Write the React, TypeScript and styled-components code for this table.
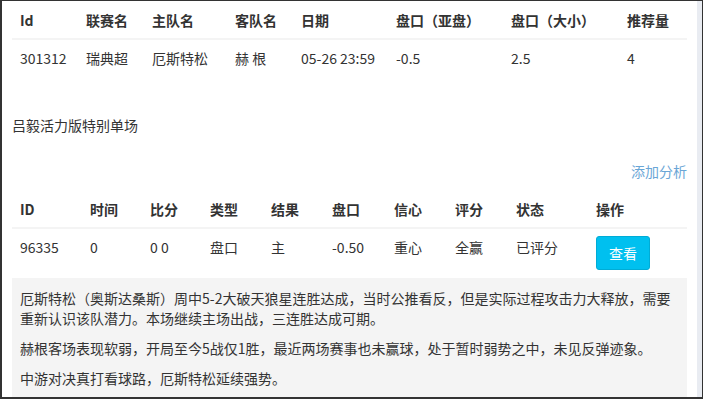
import styled, { createGlobalStyle } from "styled-components";

const GlobalStyle = createGlobalStyle`
  html, body {
    margin: 0;
    padding: 0;
    background: #fff;
  }
  * {
    box-sizing: border-box;
  }
`;

const Frame = styled.div`
  display: flex;
  width: 703px;
  height: 399px;
  border-style: solid;
  border-color: #333;
  border-width: 1px 1px 2px 2px;
  overflow: hidden;
  font-family: "Noto Sans CJK SC", "Noto Sans", sans-serif;
  font-size: 14px;
  line-height: 20px;
  color: #333;
`;

const Content = styled.div`
  flex: 1;
  padding: 1px 8px 0 10px;
  overflow: hidden;
`;

const ScrollTrack = styled.div`
  width: 5px;
  background: #e9ecf2;
`;

const Table = styled.table`
  width: 675px;
  border-collapse: collapse;
  table-layout: fixed;

  th {
    font-weight: 700;
    text-align: left;
    padding: 8px;
    border-bottom: 2px solid #f4f4f4;
    white-space: nowrap;
  }

  td {
    text-align: left;
    vertical-align: top;
    padding: 8px;
    white-space: nowrap;
  }
`;

const Title = styled.p`
  margin: 39px 0 0;
`;

const Toolbar = styled.div`
  display: flex;
  justify-content: flex-end;
  width: 675px;
  margin-top: 26px;
  margin-bottom: 10px;
`;

const AddLink = styled.a`
  color: #6aa6d6;
  text-decoration: none;
  cursor: pointer;
`;

const ViewButton = styled.button`
  font-family: inherit;
  font-size: 14px;
  line-height: 20px;
  color: #fff;
  background: #00c0ef;
  border: 1px solid #00acd6;
  border-radius: 3px;
  padding: 6px 12px;
  margin-top: -1px;
  cursor: pointer;
`;

const Analysis = styled.div`
  width: 675px;
  background: #f4f4f4;
  padding: 10px 8px 20px;

  p {
    margin: 0 0 10px;
  }
`;

const matchCols = [66, 66, 83, 66, 95, 115, 116, 68];
const tipCols = [70, 60, 60, 61, 61, 62, 61, 61, 80, 99];

const matchHead = ["Id", "联赛名", "主队名", "客队名", "日期", "盘口（亚盘）", "盘口（大小）", "推荐量"];
const matchRow = ["301312", "瑞典超", "厄斯特松", "赫 根", "05-26 23:59", "-0.5", "2.5", "4"];

const tipHead = ["ID", "时间", "比分", "类型", "结果", "盘口", "信心", "评分", "状态", "操作"];
const tipRow = ["96335", "0", "0 0", "盘口", "主", "-0.50", "重心", "全赢", "已评分"];

const paragraphs = [
  "厄斯特松（奥斯达桑斯）周中5-2大破天狼星连胜达成，当时公推看反，但是实际过程攻击力大释放，需要重新认识该队潜力。本场继续主场出战，三连胜达成可期。",
  "赫根客场表现软弱，开局至今5战仅1胜，最近两场赛事也未赢球，处于暂时弱势之中，未见反弹迹象。",
  "中游对决真打看球路，厄斯特松延续强势。",
];

function App() {
  return (
    <>
      <GlobalStyle />
      <Frame>
        <Content>
          <Table>
            <colgroup>
              {matchCols.map((w, i) => (
                <col key={i} style={{ width: w }} />
              ))}
            </colgroup>
            <thead>
              <tr>
                {matchHead.map((h) => (
                  <th key={h}>{h}</th>
                ))}
              </tr>
            </thead>
            <tbody>
              <tr>
                {matchRow.map((c, i) => (
                  <td key={i}>{c}</td>
                ))}
              </tr>
            </tbody>
          </Table>

          <Title>吕毅活力版特别单场</Title>

          <Toolbar>
            <AddLink>添加分析</AddLink>
          </Toolbar>

          <Table>
            <colgroup>
              {tipCols.map((w, i) => (
                <col key={i} style={{ width: w }} />
              ))}
            </colgroup>
            <thead>
              <tr>
                {tipHead.map((h) => (
                  <th key={h}>{h}</th>
                ))}
              </tr>
            </thead>
            <tbody>
              <tr>
                {tipRow.map((c, i) => (
                  <td key={i}>{c}</td>
                ))}
                <td>
                  <ViewButton>查看</ViewButton>
                </td>
              </tr>
            </tbody>
          </Table>

          <Analysis>
            {paragraphs.map((p, i) => (
              <p key={i}>{p}</p>
            ))}
          </Analysis>
        </Content>
        <ScrollTrack />
      </Frame>
    </>
  );
}

export default App;
